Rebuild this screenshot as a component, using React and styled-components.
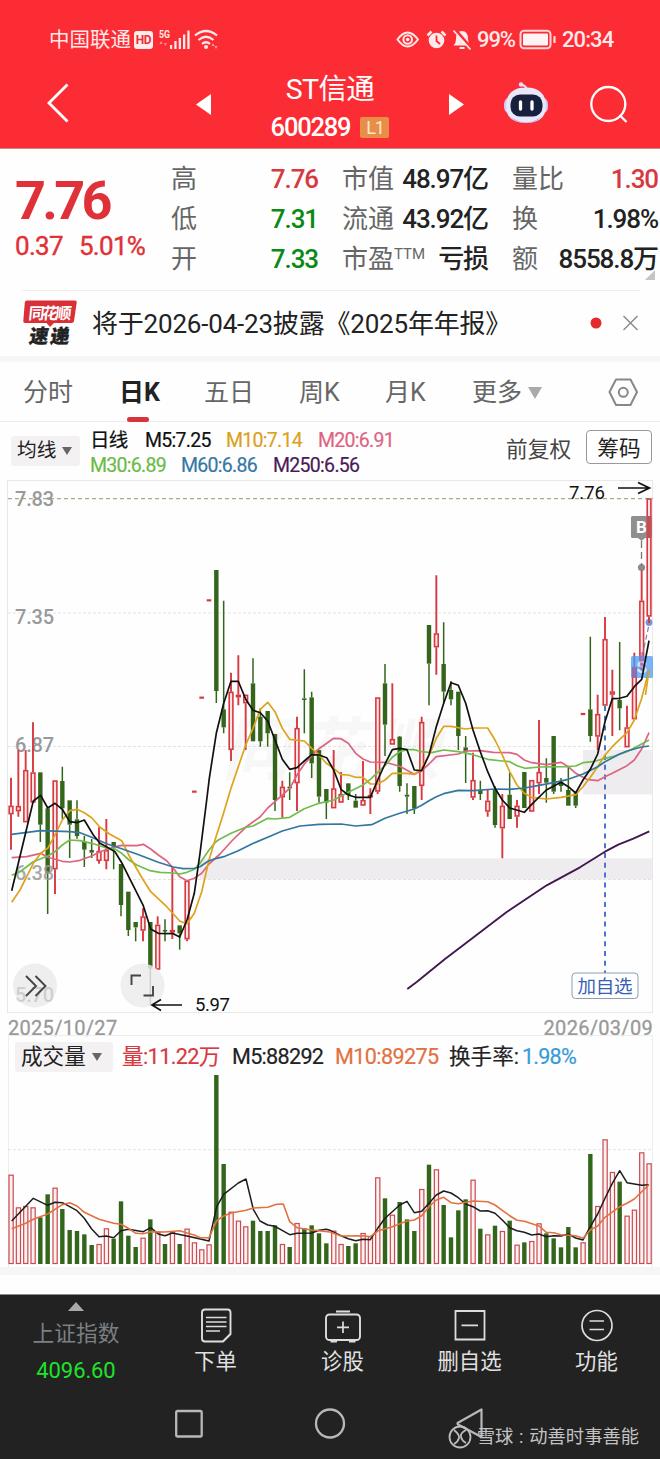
import React from "react";
import styled, { createGlobalStyle } from "styled-components";

const RED = "#d8383f";
const GREEN = "#33661a";

const GlobalStyle = createGlobalStyle`
  * { box-sizing: border-box; }
  body { margin: 0; background: #fff; }
  svg { display: block; flex: none; overflow: visible; }
`;

const Screen = styled.div`
  width: 660px;
  height: 1459px;
  overflow: hidden;
  display: flex;
  flex-direction: column;
  background: #fefefe;
  color: #222;
  font-family: Roboto, "Noto Sans CJK SC", sans-serif;
  white-space: nowrap;
`;

/* ---------- header ---------- */
const Header = styled.header`
  height: 149px;
  flex: none;
  background: #fb2c34;
  border-bottom: 1px solid #dc7f84;
  color: #fff;
`;
const StatusBar = styled.div`
  height: 64px;
  padding: 16px 47px 0 49px;
  display: flex;
  align-items: center;
  color: #ffe9e9;
`;
const Carrier = styled.span`
  font-size: 20.5px;
  line-height: 24px;
  width: 85px;
`;
const HdBadge = styled.span`
  width: 19px;
  height: 18px;
  margin-right: 5px;
  border-radius: 3px;
  background: #ffecec;
  color: #e9303a;
  font: 700 12px/18px Roboto, sans-serif;
  letter-spacing: -0.5px;
  text-align: center;
`;
const StatusRight = styled.div`
  margin-left: auto;
  display: flex;
  align-items: center;
`;
const StatusText = styled.span`
  font-size: 22px;
  font-weight: 500;
  line-height: 24px;
  letter-spacing: ${(p) => p.$ls}px;
  width: ${(p) => p.$w}px;
  margin-left: 5px;
`;
const NavBar = styled.div`
  height: 80px;
  display: flex;
  align-items: center;
  padding: 0 31px 0 46px;
`;
const TitleBlock = styled.div`
  width: 236px;
  height: 84px;
  flex: none;
  display: flex;
  flex-direction: column;
  align-items: center;
`;
const StockName = styled.div`
  font-size: 28.5px;
  line-height: 38px;
  margin-top: 9px;
  letter-spacing: -0.6px;
`;
const StockCode = styled.div`
  display: flex;
  align-items: center;
  gap: 10px;
  height: 36px;
  font-size: 25.5px;
  font-weight: 500;
  letter-spacing: -1.2px;
`;
const Level = styled.span`
  width: 29px;
  height: 21px;
  border-radius: 2px;
  background: #e88e48;
  color: #fbe9c8;
  font: 400 18px/21px Roboto, sans-serif;
  text-align: center;
`;

/* ---------- quote ---------- */
const Quote = styled.section`
  height: 141px;
  flex: none;
  display: flex;
  padding-left: 15px;
`;
const LastPrice = styled.div`
  width: 156px;
  flex: none;
  color: #df3238;
`;
const BigPrice = styled.div`
  font-size: 54px;
  font-weight: 700;
  line-height: 56px;
  letter-spacing: -3.7px;
  margin-top: 24px;
`;
const Change = styled.div`
  display: flex;
  gap: 16px;
  font-size: 26px;
  -webkit-text-stroke: 0.4px;
  letter-spacing: -0.7px;
  line-height: 34px;
`;
const Stats = styled.div`
  width: ${(p) => p.$w}px;
  margin-right: ${(p) => p.$mr || 0}px;
  padding-top: 10px;
  flex: none;
`;
const Stat = styled.div`
  height: 40px;
  display: flex;
  align-items: baseline;
  justify-content: space-between;
  font-size: 26px;
  line-height: 40px;
  color: #666;
`;
const StatValue = styled.span`
  font-size: 26px;
  font-weight: 500;
  letter-spacing: -1.1px;
  color: ${(p) => p.$c || "#222"};
`;
const Ttm = styled.sup`
  font-size: 15px;
  line-height: 10px;
  vertical-align: 9px;
`;
const More = styled.i`
  width: 0;
  height: 0;
  margin: -20px 5px 10px auto;
  border: 5px solid #c4c4c4;
  border-top-color: transparent;
  border-left-color: transparent;
`;

/* ---------- news ---------- */
const News = styled.section`
  height: 66px;
  flex: none;
  margin: 0 20px 0 22px;
  border-top: 1px solid #eee;
  display: flex;
  align-items: center;
`;
const NewsText = styled.div`
  margin-left: 14px;
  width: 498px;
  flex: none;
  font-size: 26px;
  line-height: 34px;
  letter-spacing: -0.2px;
`;
const Gap = styled.div`
  height: ${(p) => p.$h}px;
  flex: none;
  background: #f6f6f6;
`;

/* ---------- tabs ---------- */
const Tabs = styled.nav`
  height: 60px;
  flex: none;
  border-bottom: 1px solid #ebebeb;
  display: flex;
  padding-left: 23px;
`;
const Tab = styled.div`
  width: ${(p) => p.$w}px;
  flex: none;
  display: flex;
  align-items: center;
  height: 61px;
  font-size: 25px;
  line-height: 36px;
  font-weight: ${(p) => (p.$on ? 700 : 400)};
  color: ${(p) => (p.$on ? "#222" : "#666")};
`;
const TabLabel = styled.span`
  position: relative;
  &::after {
    content: "";
    position: absolute;
    left: 8px;
    bottom: -11px;
    width: 22px;
    height: 5px;
    border-radius: 3px;
    background: #d9323a;
  }
`;
const Caret = styled.i`
  width: 0;
  height: 0;
  border: ${(p) => p.$s}px solid transparent;
  border-top: ${(p) => p.$h}px solid ${(p) => p.$c};
  border-bottom: 0;
  margin-left: 6px;
`;

/* ---------- indicator legend ---------- */
const Legend = styled.section`
  height: 58px;
  flex: none;
  display: flex;
  padding: 8px 7px 0 11px;
`;
const Picker = styled.div`
  width: ${(p) => p.$w}px;
  height: 30px;
  flex: none;
  margin-top: ${(p) => p.$mt || 0}px;
  margin-right: ${(p) => p.$mr || 0}px;
  padding-left: 6px;
  border-radius: 3px;
  background: #f4f1f3;
  display: flex;
  align-items: center;
  font-size: ${(p) => p.$fs}px;
  line-height: 30px;
`;
const Averages = styled.div`
  width: 416px;
  flex: none;
  margin: -2px 0 0 10px;
`;
const AverageRow = styled.div`
  display: flex;
  height: 25px;
  font-size: 19.5px;
  line-height: 25px;
`;
const Average = styled.span`
  width: ${(p) => p.$w}px;
  color: ${(p) => p.$c};
  letter-spacing: -0.7px;
  -webkit-text-stroke: 0.2px;
`;
const Adjust = styled.span`
  width: 80px;
  flex: none;
  font-size: 21.7px;
  line-height: 40px;
  color: #444;
`;
const Outlined = styled.button`
  width: 66px;
  height: 34px;
  padding: 0;
  border: 1px solid #999;
  border-radius: 4px;
  background: #fff;
  color: #222;
  font: 400 21.7px/30px "Noto Sans CJK SC", sans-serif;
`;

const Dates = styled.div`
  height: 22px;
  flex: none;
  padding: 0 7px 0 8px;
  display: flex;
  justify-content: space-between;
  font-size: 20px;
  line-height: 30px;
  letter-spacing: 0.3px;
  color: #999;
  -webkit-text-stroke: 0.3px;
`;
const VolumePanel = styled.section`
  flex: none;
  height: 232px;
  margin: 0 7px 0 8px;
  border: 1px solid #ededed;
  border-bottom: 0;
`;
const VolumeHead = styled.div`
  height: 36px;
  padding: 6px 0 0 6px;
  display: flex;
  align-items: center;
`;
const VolumeStat = styled.span`
  font-size: 21.6px;
  line-height: 30px;
  width: ${(p) => p.$w}px;
  flex: none;
  color: ${(p) => p.$c};
  letter-spacing: ${(p) => p.$ls}px;
  -webkit-text-stroke: 0.2px;
`;

/* ---------- bottom ---------- */
const Spacer = styled.div`
  height: 19px;
  flex: none;
`;
const Bottom = styled.footer`
  position: relative;
  flex: 1;
  border-top: 1px solid #8a8f8d;
  background: #222;
  color: #e0e0e0;
`;
const Actions = styled.div`
  display: flex;
  height: 99px;
`;
const Index = styled.div`
  width: 152px;
  display: flex;
  flex-direction: column;
  align-items: center;
  color: #7b8082;
  font-size: 21.7px;
  line-height: 32px;
`;
const UpMark = styled.i`
  width: 0;
  height: 0;
  margin: 7px 0 7px;
  border: 8px solid transparent;
  border-top: 0;
  border-bottom: 9px solid #aaa;
`;
const IndexValue = styled.span`
  color: #1ee32c;
  line-height: 42px;
  font-size: 22px;
  letter-spacing: -0.1px;
`;
const Action = styled.div`
  width: 127px;
  padding-top: 13px;
  display: flex;
  flex-direction: column;
  align-items: center;
  font-size: 21.4px;
  line-height: 32px;
  gap: 2px;
`;
const SystemNav = styled.div`
  display: flex;
  justify-content: space-between;
  height: 60px;
  align-items: center;
  padding: 0 177px 0 173px;
`;
const Credit = styled.div`
  position: absolute;
  right: 21px;
  bottom: 8px;
  height: 28px;
  display: flex;
  align-items: center;
  gap: 5px;
  font-size: 18.3px;
  line-height: 26px;
  color: #c2c2c2;
`;
const CreditColon = styled.span`
  display: inline-block;
  width: 16px;
  text-align: center;
`;

/* Daily candles in thirds of a pixel: colour, high, body top, body bottom, low. */
const CANDLES = [
  [2220, "r 113 197 223 329,r 30 198 214 230,r 30 90 247 247,r -53 97 188 188,g 97 97 254 306,g 205 205 400 522,r 121 121 388 462,g 80 123 205 237,g 181 181 254 354,g 181 238 288 296,g 287 306 329 381,g 297 330 338 354,r 262 333 363 371,r 237 330 363 388,g 306 306 320 388,g 372 372 495 529,g 455 455 570 588,g 546 546 562 604,r 505 529 572 604,g 546 546 686 795,r 529 554 689 689,g 538 570 573 604,r 380 570 573 597,g 556 556 580 629,r 422 422 598 604,d 155,d -127,d -419"],
  [1620, "g 90 90 453 489,g 182 508 562 580,r 398 455 630 663,r 346 464 472 496,r 464 464 490 630,g 355 430 604 604,g 505 530 604 620,g 513 513 580 620,g 582 582 780 813,r 722 740 772 833,g 697 740 745 780,r 530 564 730 813,g 388 475 480 580,g 455 472 670 714,g 630 630 770 788,g 747 747 788 837,r 630 745 805 805,r 696 762 788 788,g 730 730 765 780,g 762 782 803 803,r 663 780 797 797,r 745 765 770 822,r 472 472 755 762,g 372 430 554 648,r 430 597 614 614,g 588 590 738 755,g 730 764 770 822,g 738 738 806 822,r 530 546 738 780,g 255 255 371 496,r 106 280 322 404,g 247 372 455 490,g 423 450 478 496,g 455 455 588 630,g 588 622 634 729,r 638 720 773 780,g 722 750 762 780,r 747 782 815 830,g 738 750 855 863,r 762 797 865 955,g 697 764 837 837,r 780 797 830 863,g 696 696 804 804,r 720 720 815 815,r 540 696 730 762,g 655 714 728 788,g 588 588 755 762,g 714 725 738 755,g 680 750 797 797,g 760 760 797 804,d 522,g 290 508 588 605,r 464 522 590 630,r 231 297 497 497,r 389 454 464 588,g 306 480 505 571,r 497 562 622 622,r 338 380 538 538,r 90 182 385 390,r -125 -125 230 247"],
].flatMap(([base, rows]) =>
  rows.split(",").map((row) => {
    const [kind, ...v] = row.split(" ");
    return { kind, v: v.map((n) => (Number(n) + base) / 3) };
  })
);

/* Each line is a list of runs in thirds of a pixel: x origin, y origin, then x,y pairs. */
const M250 = [[600, 2280, "622,687 650,666 735,597 810,540 920,456 1040,376 1140,322 1215,275 1255,254 1300,236 1348,214"]];
const M60 = [
  [0, 2220, "35,283 122,272 209,275 240,278 275,292 322,312 365,326 410,342 475,367 520,381 550,386 583,385"],
  [600, 2280, "0,320 25,303 50,295 75,289 115,272 160,250"],
  [600, 1620, "205,891 247,873 300,858 357,853 423,852 467,858 515,854 555,835 599,820 643,807"],
  [1260, 1620, "5,796 27,782 49,770 71,761 115,751 159,752 225,747 269,748 313,744 357,736 401,728 445,718 489,702 533,680 555,665 599,642 621,633 665,621 687,618"],
];
const M30 = [
  [0, 2220, "35,406 60,395 100,365 143,348 165,335 187,315 209,300 240,302 275,310 322,325 345,327 365,340 387,360 410,375 450,392 480,397 520,399 539,402 561,397 583,388 600,370 627,330 645,308"],
  [600, 1620, "55,900 93,880 137,862 159,858 203,835 225,837 269,832 313,806 357,790 401,780 445,757 489,735 511,718 533,697 555,677 577,652 599,635 621,629 643,629"],
  [1260, 1620, "5,635 35,638 71,630 115,635 159,644 203,658 247,663 269,665 291,677 315,685 357,681 440,680 467,678 489,668 520,665 555,655 577,650 621,635 665,612 687,600"],
];
const M20 = [
  [0, 2220, "35,353 80,350 122,340 143,352 187,364 209,366 240,361 275,348 300,335 345,320 365,316 410,317 430,313 452,327 475,345 500,362 520,385 539,410 561,422 583,415 605,400 627,372 660,342"],
  [600, 1620, "98,900 137,862 181,830 203,804 225,785 269,745 291,705 313,672 335,647 357,626 401,595 423,596 445,610 467,640 489,657 511,666 555,667 599,679 643,703"],
  [1260, 1620, "5,692 27,672 49,650 115,642 137,633 181,632 220,637 269,638 291,643 313,660 335,668 379,674 423,667 445,680 467,700 500,718 533,722 555,710 577,700 621,677 643,660 665,627 687,578"],
];
const M10 = [
  [0, 2220, "35,487 60,450 100,370 122,340 143,325 165,285 187,240 209,212 231,208 253,218 275,233 300,262 330,283 365,302 390,352 430,420 452,455 500,500 539,543 561,552 583,520 605,455 627,360 645,300"],
  [600, 1620, "70,822 93,745 115,680 137,615 159,565 181,508 203,487 225,515 247,565 269,598 313,603 335,625 357,645 379,670 401,685 423,704 445,705 467,712 489,712 511,732 533,732 555,720 577,700 621,700 643,703"],
  [1260, 1620, "5,685 30,640 49,595 71,559 93,559 137,567 159,564 203,564 225,600 247,645 269,695 291,735 313,760 335,772 379,777 423,772 467,764 489,740 511,712 533,680 555,645 577,620 599,598 621,578 643,540 665,475 687,390"],
];
const M5 = [
  [0, 2220, "35,452 100,183 122,166 143,204 165,190 187,208 209,245 231,248 253,240 280,285 300,310 322,322 345,335 365,368 430,497 452,567 475,580 520,581 539,591 561,540 583,460 600,340 620,180"],
  [600, 1620, "28,715 49,580 71,490 93,424 115,424 137,478 159,511 181,518 203,543 225,600 247,658 269,688 291,683 313,663 335,644 357,645 380,653 401,690 423,748 445,765 467,772 511,772 533,720 555,672 577,629 599,625 621,629 643,690"],
  [1260, 1620, "5,692 27,645 49,560 71,490 93,428 115,436 137,490 159,570 181,635 203,695 225,745 247,780 269,804 313,817 335,793 379,750 423,727 445,740 467,759 489,720 511,688 533,642 555,545 577,476 599,475 621,469 643,440 665,418 687,302"],
];
const V5 = [
  [0, 3030, "35,633 100,565 143,586 165,577 187,578 209,590 231,602 253,625 275,657 297,680 319,678 341,683 363,662 385,658 430,665 452,653 475,672 495,677 517,669 561,678 627,693 650,590 671,553 715,519 738,507 760,598 780,633 803,645 825,649 869,674 891,670 935,669 957,661 979,658"],
  [990, 3030, "0,661 33,677 55,686 77,692 99,688 121,689 143,655 165,625 187,605 209,585 231,574 253,608 275,604 297,580 319,555 341,543 363,549 385,563 407,582 429,590 451,603 473,602 495,610 517,630 539,653 561,662 583,667 605,675 627,672 649,680 671,677 693,678 715,672 737,684 759,690 781,650 803,612 825,565 847,520 869,482 891,518 935,526 957,524"],
];
const V10 = [
  [0, 3030, "35,656 77,640 100,628 143,612 187,584 209,578 231,588 253,607 297,628 341,640 363,643 385,655 408,670 430,671 452,665 495,666 539,662 561,669 583,675 600,683 627,683 650,632 671,618 693,609 738,601 760,594 803,592 830,583 850,582 869,635 891,653 935,660"],
  [990, 3030, "0,666 33,678 99,677 121,680 143,663 187,650 231,633 253,630 275,617 297,590 319,570 341,562 363,578 385,581 429,573 473,575 495,585 517,601 539,617 561,631 583,634 627,648 649,667 671,668 693,674 737,677 759,685 781,660 803,648 825,622 869,590 891,580 913,567 935,545 957,524"],
];

const VOLUMES =
  "r494 r592 r588 r592 g622 g553 r533 g597 g660 g663 g673 g705 r702 r655 g686 g574 g677 g711 r683 g628 r665 g702 r665 g702 r656 r697 r718 r703 g195 g462 r605 r632 r649 g632 g663 g663 g646 r702 g711 r639 g655 g646 g670 g700 r662 r702 g708 g700 r669 r678 r502 g565 r614 g576 g628 g663 r537 g464 r478 g585 g682 g601 g568 r509 g656 r673 g647 r663 g632 r704 g697 r693 r640 g670 g685 g712 g651 g712 r697 g432 r588 r388 r486 g515 r617 r599 r427 r460".split(" ");

const barX = (i) => 11 + (i * 22) / 3;

function Line({ runs, color, width = 1.7 }) {
  const points = runs
    .flatMap(([dx, dy, pairs]) =>
      pairs.split(" ").map((pair) => {
        const [x, y] = pair.split(",").map(Number);
        return `${((x + dx) / 3).toFixed(1)},${((y + dy) / 3).toFixed(1)}`;
      })
    )
    .join(" ");
  return <polyline points={points} fill="none" stroke={color} strokeWidth={width} strokeLinejoin="round" />;
}

function Candle({ i, kind, v }) {
  const x = barX(i);
  if (kind === "d") return <rect x={x - 2.3} y={v[0] - 1.1} width="4.6" height="2.2" fill={RED} />;
  const [high, top, bottom, low] = v;
  const up = kind === "r";
  const color = up ? RED : GREEN;
  const body = Math.max(bottom - top, 1.5);
  return (
    <g>
      <path d={`M${x} ${high}V${top}M${x} ${bottom}V${low}`} stroke={color} strokeWidth={up ? 1.9 : 1.5} />
      {up ? (
        <rect x={x - 1.8} y={top + 0.7} width="3.7" height={Math.max(body - 1.4, 1)} fill="#fbe4e4" stroke={color} strokeWidth="1.6" />
      ) : (
        <rect x={x - 2.2} y={top} width="4.4" height={body} fill={color} />
      )}
    </g>
  );
}

const AxisLabel = styled.text`
  font: 500 20px Roboto, sans-serif;
  fill: #999;
  fill-opacity: ${(p) => p.$o || 1};
`;
const MarkLabel = styled.text`
  font: 400 18.5px Roboto, sans-serif;
  fill: #111;
`;
const Brand = styled.text`
  font: italic 700 68px "Noto Sans CJK SC", sans-serif;
  fill: #f7f7f8;
`;
const FlagLetter = styled.text`
  font: 700 17px Roboto, sans-serif;
  fill: #fff;
`;
const WatchText = styled.text`
  font: 400 18.5px "Noto Sans CJK SC", sans-serif;
  fill: #3a60b4;
`;

function PriceChart() {
  return (
    <svg width="660" height="533" viewBox="0 480 660 533">
      <Brand x="222" y="774" textLength="218">同花顺</Brand>
      <path d="M583 750H653V794.5H583Z" fill="#efecef" />
      <path d="M200 858.3H653V879.3H200Z" fill="#efecef" />
      <rect x="7.5" y="480.5" width="645" height="532" fill="none" stroke="#e8e8e8" />
      <path d="M8 498.7H653" stroke="#b3a68c" strokeWidth="1.2" strokeDasharray="4 3" />
      <path d="M8 613H653M8 746.5H653M8 879.5H653" stroke="#e3e3e3" strokeDasharray="3 2" />
      <AxisLabel x="15" y="506" textLength="39">7.83</AxisLabel>
      <AxisLabel x="15" y="623.5" textLength="39">7.35</AxisLabel>
      <AxisLabel x="15" y="751.5" textLength="39">6.87</AxisLabel>
      <path d="M605 706V973" stroke="#4b74cb" strokeWidth="2" strokeDasharray="5 4.8" />
      {CANDLES.map((c, i) => (
        <Candle key={i} i={i} {...c} />
      ))}
      <AxisLabel x="15" y="879.5" textLength="39" $o={0.85}>6.38</AxisLabel>
      <Line runs={M20} color="#dd6480" />
      <Line runs={M30} color="#70bd4c" />
      <Line runs={M10} color="#dda31d" />
      <Line runs={M60} color="#33779f" />
      <Line runs={M250} color="#43184f" width={1.9} />
      <rect x="631" y="656" width="22" height="22" rx="1.5" fill="#4b9cf5" fillOpacity=".75" />
      <FlagLetter x="636.5" y="673" fillOpacity=".7">S</FlagLetter>
      <path d="M641.5 652V669" stroke="#c8458a" strokeOpacity=".5" strokeWidth="2.5" />
      <path d="M634.5 668V678" stroke="#b0508c" strokeOpacity=".7" strokeWidth="4" />
      <path d="M648.5 627L642 657" stroke="#8b78b4" strokeWidth="1.2" strokeDasharray="5 3" />
      <circle cx="649" cy="622.5" r="3.4" fill="#6d97df" />
      <path d="M649 618V623" stroke={RED} strokeWidth="2" />
      <path d="M645.5 695L649 670" stroke="#dda31d" strokeWidth="1.7" />
      <Line runs={M5} color="#111" />
      <path d="M632.5 516H650Q651.5 516 651.5 517.5V536.5Q651.5 538 650 538H645L641.5 541L638 538H632.5Q631 538 631 536.5V517.5Q631 516 632.5 516Z" fill="#8f8f8f" />
      <FlagLetter x="636" y="533">B</FlagLetter>
      <rect x="646.5" y="516" width="5" height="22" fill="#d8383f" fillOpacity=".75" />
      <path d="M641.5 541V566" stroke="#777" strokeWidth="1.3" strokeDasharray="7 4" />
      <circle cx="641.5" cy="567.5" r="3.6" fill="#777" fillOpacity=".85" />
      <MarkLabel x="569" y="498.5" textLength="36">7.76</MarkLabel>
      <path d="M618 488H649M638 482.5L649.5 488L638 493.5" fill="none" stroke="#111" strokeWidth="1.7" />
      <MarkLabel x="195" y="1010.5" textLength="35">5.97</MarkLabel>
      <rect x="572" y="973" width="66" height="25.5" rx="3.5" fill="#fff" stroke="#8d9fb3" />
      <WatchText x="577.5" y="993" textLength="55">加自选</WatchText>
      <circle cx="35" cy="985.5" r="22" fill="#ececec" fillOpacity=".88" />
      <AxisLabel x="15" y="1001.5" textLength="39" $o={0.4}>5.70</AxisLabel>
      <path d="M26 976L36 986L26 996M35.5 976L45.5 986L35.5 996" fill="none" stroke="#444" strokeWidth="1.9" />
      <circle cx="142.5" cy="985.5" r="22" fill="#ececec" fillOpacity=".82" />
      <path d="M131.5 985V975.5H141M143.5 995.5H153V986" fill="none" stroke="#444" strokeWidth="1.9" />
      <path d="M182 1005H152M161 999.5L152 1005L161 1010.5" fill="none" stroke="#111" strokeWidth="1.7" />
    </svg>
  );
}

function VolumeChart() {
  return (
    <svg width="644" height="195" viewBox="9 1072 644 195">
      <path d="M8 1149.7H653" stroke="#e3e3e3" strokeDasharray="3 2" />
      {VOLUMES.map((bar, i) => {
        const top = 1010 + Number(bar.slice(1)) / 3;
        const x = barX(i);
        return bar[0] === "r" ? (
          <rect key={i} x={x - 2} y={top + 0.5} width="4.2" height={1263 - top} fill="#fdf1f0" stroke="#c94a50" strokeWidth="1.2" />
        ) : (
          <rect key={i} x={x - 2.2} y={top} width="4.4" height={1264 - top} fill={GREEN} />
        );
      })}
      <Line runs={V5} color="#1d1d1d" width={1.5} />
      <Line runs={V10} color="#e2713f" width={1.6} />
    </svg>
  );
}

const Signal = () => (
  <svg width="61" height="24" viewBox="0 0 61 24" fill="#ffe9e9">
    <text x="1" y="9.5" fontSize="10.5" fontWeight="700" fontFamily="Roboto" textLength="11" lengthAdjust="spacingAndGlyphs">5G</text>
    <path d="M3 13L1.5 16H4.5ZM7.5 18L6 15H9Z" opacity=".5" />
    <path d="M12 17h2.2v4H12zM16.3 13h2.3v8h-2.3zM20.7 10h2.3v11h-2.3zM25 6.5h2.3V21H25zM29.3 2.5h2.3V21h-2.3z" />
    <path d="M37 7.5Q48 -1.5 59 7.5M40.500 12Q48 5.500 55.500 12M44 16Q48 12.500 52 16" fill="none" stroke="#ffe9e9" strokeWidth="2.2" />
    <circle cx="48" cy="19" r="2" />
    <path d="M53.500 18l1.500-3 1.500 3zM56.500 18l1.500 3 1.500-3z" opacity=".6" />
  </svg>
);

const StatusIcons = () => (
  <svg width="76" height="24" viewBox="396 28 76 24" fill="none" stroke="#ffe9e9" strokeWidth="2">
    <path d="M397.5 39.5Q407.5 25.5 418 39.5Q407.5 53.5 397.5 39.5Z" />
    <circle cx="407.7" cy="39.5" r="4.3" />
    <circle cx="407.7" cy="39.5" r="1.8" fill="#ffe9e9" stroke="none" />
    <circle cx="436.5" cy="40.5" r="7.8" fill="#ffe9e9" stroke="none" />
    <path d="M427.5 35.5L431.5 31.5M445.5 35.5L441.5 31.5" strokeWidth="2.5" />
    <path d="M436.5 35.5V41L440 44" stroke="#fb2c34" strokeWidth="1.8" />
    <path d="M453.5 45.5Q456 43 456 39Q456 31 462 31Q468 31 468 39Q468 43 470.5 45.5Z" fill="#ffe9e9" stroke="none" />
    <path d="M459.5 48H464.5" />
    <path d="M455 29.5L472 49" stroke="#fb2c34" strokeWidth="3" />
    <path d="M453.5 30.5L470.5 49.5" strokeWidth="1.7" />
  </svg>
);

const Battery = () => (
  <svg width="38" height="22" viewBox="0 0 38 22" fill="none">
    <rect x="1.5" y="1.8" width="30" height="17.5" rx="3.5" stroke="#ffd5d5" strokeWidth="2" />
    <rect x="4" y="4.5" width="25" height="12" rx="1" fill="#fff3f3" />
    <path d="M35.5 7V14" stroke="#ffd5d5" strokeWidth="2.2" />
  </svg>
);

const Robot = () => (
  <svg width="46" height="46" viewBox="503 81 46 46">
    <path d="M527 90Q526 85 521 85" fill="none" stroke="#e9e3ff" strokeWidth="2" />
    <circle cx="521" cy="84.5" r="2.2" fill="#e4defa" />
    <rect x="504" y="97" width="44" height="17" rx="7" fill="#d2c9f8" />
    <path d="M526 87.5C540 87.5 546 95 546 106C546 118 538 123 526 123C514 123 506 118 506 106C506 95 512 87.5 526 87.5Z" fill="#e9e7fa" />
    <path d="M511 117Q526 128 541 117Q536 123 526 123Q516 123 511 117Z" fill="#b0a0f0" />
    <rect x="510.5" y="94.5" width="32" height="22" rx="9.5" fill="#17203d" />
    <path d="M520.500 102V109M532 102V109" stroke="#fff" strokeWidth="3.3" strokeLinecap="round" />
  </svg>
);

const NewsLogo = () => (
  <svg width="56" height="50" viewBox="22 299 56 50">
    <path d="M27 300.5H75Q77 300.5 76.7 302.5L74 321Q73.7 323 71.5 323H54L50 327L46.5 323H25Q23 323 23.3 321L24.8 302.5Q25 300.5 27 300.5Z" fill="#d92f36" />
    <text transform="translate(28 318.5) skewX(-6)" fontSize="16" fontWeight="700" fontFamily="Noto Sans CJK SC" fill="#fff" textLength="43">同花顺</text>
    <text transform="translate(28.5 343) skewX(-9)" fontSize="19" fontWeight="900" fontFamily="Noto Sans CJK SC" fill="#222" stroke="#222" strokeWidth=".4" textLength="40">速递</text>
  </svg>
);

export default function App() {
  return (
    <Screen>
      <GlobalStyle />
      <Header>
        <StatusBar>
          <Carrier>中国联通</Carrier>
          <HdBadge>HD</HdBadge>
          <Signal />
          <StatusRight>
            <StatusIcons />
            <StatusText $w={42} $ls={-1.1}>99%</StatusText>
            <Battery />
            <StatusText $w={51} $ls={-0.9}>20:34</StatusText>
          </StatusRight>
        </StatusBar>
        <NavBar>
          <svg width="166" height="42" viewBox="46 83 166 42" fill="none">
            <path d="M67.5 84.5L49 103L67.5 121.5" stroke="#fff" strokeWidth="2.8" />
            <path d="M196 104.5L211 94V115Z" fill="#fff" />
          </svg>
          <TitleBlock>
            <StockName>ST信通</StockName>
            <StockCode>
              600289<Level>L1</Level>
            </StockCode>
          </TitleBlock>
          <svg width="55" height="42" viewBox="448 83 55 42">
            <path d="M464 104.5L449 94V115Z" fill="#fff" />
          </svg>
          <Robot />
          <svg width="80" height="42" viewBox="549 83 80 42" fill="none" stroke="#fff" strokeWidth="2.3">
            <circle cx="608.3" cy="104" r="17" />
            <path d="M619.5 115L626.5 122" />
          </svg>
        </NavBar>
      </Header>

      <Quote>
        <LastPrice>
          <BigPrice>7.76</BigPrice>
          <Change>
            <span>0.37</span>
            <span>5.01%</span>
          </Change>
        </LastPrice>
        <Stats $w={147} $mr={24}>
          <Stat>高<StatValue $c="#d8383f">7.76</StatValue></Stat>
          <Stat>低<StatValue $c="#0a8a14">7.31</StatValue></Stat>
          <Stat>开<StatValue $c="#0a8a14">7.33</StatValue></Stat>
        </Stats>
        <Stats $w={146} $mr={24}>
          <Stat>市值<StatValue>48.97亿</StatValue></Stat>
          <Stat>流通<StatValue>43.92亿</StatValue></Stat>
          <Stat>
            <span>市盈<Ttm>TTM</Ttm></span>
            <StatValue>亏损</StatValue>
          </Stat>
        </Stats>
        <Stats $w={146}>
          <Stat>量比<StatValue $c="#d8383f">1.30</StatValue></Stat>
          <Stat>换<StatValue>1.98%</StatValue></Stat>
          <Stat>额<StatValue>8558.8万</StatValue></Stat>
        </Stats>
      </Quote>
      <More />

      <News>
        <NewsLogo />
        <NewsText>将于2026-04-23披露《2025年年报》</NewsText>
        <svg width="50" height="20" viewBox="590 314 50 20">
          <circle cx="596" cy="323" r="5.5" fill="#e6292f" />
          <path d="M623.5 316L637.5 330M637.5 316L623.5 330" stroke="#888" strokeWidth="1.4" />
        </svg>
      </News>
      <Gap $h={6} />

      <Tabs>
        <Tab $w={96}>分时</Tab>
        <Tab $w={85} $on><TabLabel>日K</TabLabel></Tab>
        <Tab $w={95}>五日</Tab>
        <Tab $w={86}>周K</Tab>
        <Tab $w={87}>月K</Tab>
        <Tab $w={136}>更多<Caret $s={7} $h={12} $c="#aaa" /></Tab>
        <svg width="30" height="60" viewBox="608 362 30 60" fill="none" stroke="#888" strokeWidth="2">
          <path d="M616 379.5H630.5L637 392L630.5 405H616L609.5 392Z" strokeLinejoin="round" />
          <circle cx="623.3" cy="392.3" r="4.5" />
        </svg>
      </Tabs>

      <Legend>
        <Picker $w={69} $mt={6} $fs={19.7}>
          均线<Caret $s={5.5} $h={8} $c="#666" />
        </Picker>
        <Averages>
          <AverageRow>
            <Average $w={55} $c="#111">日线</Average>
            <Average $w={81} $c="#111">M5:7.25</Average>
            <Average $w={92} $c="#dca01c">M10:7.14</Average>
            <Average $w={80} $c="#dd6480">M20:6.91</Average>
          </AverageRow>
          <AverageRow>
            <Average $w={91} $c="#6abb45">M30:6.89</Average>
            <Average $w={92} $c="#3377a5">M60:6.86</Average>
            <Average $w={90} $c="#4b1a57">M250:6.56</Average>
          </AverageRow>
        </Averages>
        <Adjust>前复权</Adjust>
        <Outlined>筹码</Outlined>
      </Legend>

      <PriceChart />
      <Dates>
        <span>2025/10/27</span>
        <span>2026/03/09</span>
      </Dates>
      <VolumePanel>
        <VolumeHead>
          <Picker $w={98} $mr={9} $fs={21.6}>
            成交量<Caret $s={5.5} $h={8} $c="#666" />
          </Picker>
          <VolumeStat $w={110} $c={RED} $ls={-0.6}>量:11.22万</VolumeStat>
          <VolumeStat $w={103} $c="#222" $ls={-0.7}>M5:88292</VolumeStat>
          <VolumeStat $w={114} $c="#e2713f" $ls={-0.6}>M10:89275</VolumeStat>
          <VolumeStat $w={73} $c="#222" $ls={0}>换手率:</VolumeStat>
          <VolumeStat $w={60} $c="#389bd8" $ls={-0.8}>1.98%</VolumeStat>
        </VolumeHead>
        <VolumeChart />
      </VolumePanel>
      <Gap $h={8} />
      <Spacer />

      <Bottom>
        <Actions>
          <Index>
            <UpMark />
            上证指数
            <IndexValue>4096.60</IndexValue>
          </Index>
          <Action>
            <svg width="36" height="36" viewBox="197 1308 36 36" fill="none" stroke="#ddd" strokeWidth="1.9">
              <path d="M204 1309.5H226.5Q229.5 1309.5 229.5 1312.5V1334L222 1341.5H204Q201 1341.5 201 1338.5V1312.5Q201 1309.5 204 1309.5Z" />
              <path d="M205 1317.5H225.5M205 1322H225.5M205 1326.5H225.5M205 1331H219M222 1341.5L229.5 1334" strokeWidth="1.6" />
            </svg>
            下单
          </Action>
          <Action>
            <svg width="38" height="36" viewBox="323 1308 38 36" fill="none" stroke="#ddd" strokeWidth="1.9">
              <rect x="325" y="1314.5" width="34" height="25.5" rx="3.5" />
              <path d="M335 1311.5H349M329.5 1341.5H336M348 1341.5H354.5" strokeWidth="2.2" />
              <path d="M342 1321.5V1333M336 1327.3H348" strokeWidth="1.7" />
            </svg>
            诊股
          </Action>
          <Action>
            <svg width="36" height="36" viewBox="451 1308 36 36" fill="none" stroke="#ddd" strokeWidth="1.8">
              <path d="M454.5 1311H483.5V1339.5H454.5ZM460.5 1325.3H477" />
            </svg>
            删自选
          </Action>
          <Action>
            <svg width="36" height="36" viewBox="578 1308 36 36" fill="none" stroke="#ddd" strokeWidth="1.7">
              <circle cx="596" cy="1325.5" r="15" />
              <path d="M588.5 1321H603M588.5 1329.5H603" />
            </svg>
            功能
          </Action>
        </Actions>
        <SystemNav>
          <svg width="32" height="34" viewBox="173 1407 32 34">
            <rect x="176.2" y="1411" width="25.5" height="25.5" rx="1.5" fill="none" stroke="#b8b8b8" strokeWidth="2.3" />
          </svg>
          <svg width="34" height="34" viewBox="313 1407 34 34">
            <circle cx="330" cy="1423.5" r="14" fill="none" stroke="#b8b8b8" strokeWidth="2.3" />
          </svg>
          <svg width="28" height="34" viewBox="455 1407 28 34">
            <path d="M481.5 1409.5V1437L458 1424.5Q457 1423.5 458 1422.7Z" fill="none" stroke="#b8b8b8" strokeWidth="2.2" strokeLinejoin="round" />
          </svg>
        </SystemNav>
        <Credit>
          <svg width="24" height="24" viewBox="-12 -12 24 24" fill="none" stroke="#bdbdbd" strokeWidth="1.8">
            <circle r="10.5" />
            <path d="M-6 -7Q0 -2 -1 1Q-2 5 -6 7M6 -7Q0 -4 1 0Q2 4 6 6" />
          </svg>
          <span>雪球<CreditColon>:</CreditColon>动善时事善能</span>
        </Credit>
      </Bottom>
    </Screen>
  );
}
